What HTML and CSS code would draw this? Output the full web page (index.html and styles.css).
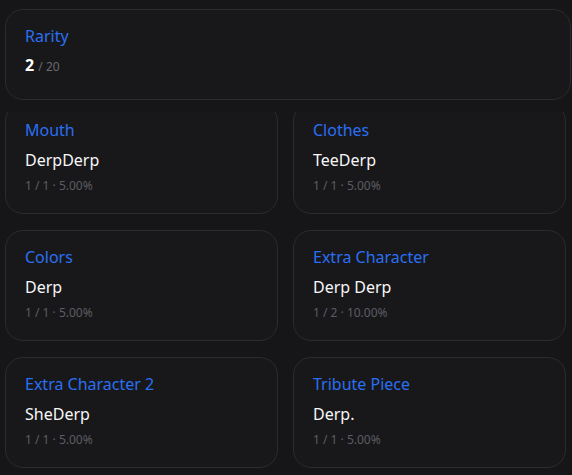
FILE: index.html
```html
<!DOCTYPE html>
<html lang="en">
<head>
<meta charset="utf-8">
<title>Traits</title>
<link rel="stylesheet" href="styles.css">
</head>
<body>
<div class="page">
  <header class="header">
    <section class="card rarity">
      <div class="label">Rarity</div>
      <div class="score"><span class="score-value">2</span> <span class="score-total">/ 20</span></div>
    </section>
  </header>
  <main class="viewport">
    <div class="grid">
      <section class="card trait">
        <div class="label">Mouth</div>
        <div class="value">DerpDerp</div>
        <div class="meta">1 / 1 · 5.00%</div>
      </section>
      <section class="card trait">
        <div class="label">Clothes</div>
        <div class="value">TeeDerp</div>
        <div class="meta">1 / 1 · 5.00%</div>
      </section>
      <section class="card trait">
        <div class="label">Colors</div>
        <div class="value">Derp</div>
        <div class="meta">1 / 1 · 5.00%</div>
      </section>
      <section class="card trait">
        <div class="label">Extra Character</div>
        <div class="value">Derp Derp</div>
        <div class="meta">1 / 2 · 10.00%</div>
      </section>
      <section class="card trait">
        <div class="label">Extra Character 2</div>
        <div class="value">SheDerp</div>
        <div class="meta">1 / 1 · 5.00%</div>
      </section>
      <section class="card trait">
        <div class="label">Tribute Piece</div>
        <div class="value">Derp.</div>
        <div class="meta">1 / 1 · 5.00%</div>
      </section>
    </div>
  </main>
</div>
</body>
</html>
```

FILE: styles.css
```css
* { box-sizing: border-box; }
html, body {
  margin: 0;
  height: 100%;
  background: #161618;
  overflow: hidden;
}
body {
  font-family: "Noto Sans", "Open Sans", sans-serif;
  color: #f4f4f5;
}
.page {
  height: 475px;
  display: flex;
  flex-direction: column;
}
.header {
  padding: 9px 1px 12px 5px;
  background: #161618;
}
.card {
  background: #18181b;
  border: 1px solid #2c2c30;
  border-radius: 18px;
}
.rarity {
  height: 91px;
  padding: 16px 19px;
}
.label {
  color: #2a6ff2;
  font-size: 16px;
  line-height: 20px;
}
.score {
  margin-top: 9px;
  line-height: 20px;
}
.score-value {
  font-size: 16px;
  font-weight: 700;
  color: #ffffff;
}
.score-total {
  font-size: 12px;
  color: #6a6a6f;
}
.viewport {
  flex: 1;
  overflow: hidden;
  padding: 0 6px 0 5px;
}
.grid {
  margin-top: -9px;
  display: grid;
  grid-template-columns: 1fr 1fr;
  column-gap: 15px;
  row-gap: 16px;
}
.trait {
  height: 111px;
  padding: 16px 19px;
}
.value {
  margin-top: 10px;
  font-size: 16px;
  line-height: 20px;
  color: #f7f7f8;
}
.meta {
  margin-top: 8px;
  font-size: 12px;
  line-height: 16px;
  color: #5c5c61;
}
```
